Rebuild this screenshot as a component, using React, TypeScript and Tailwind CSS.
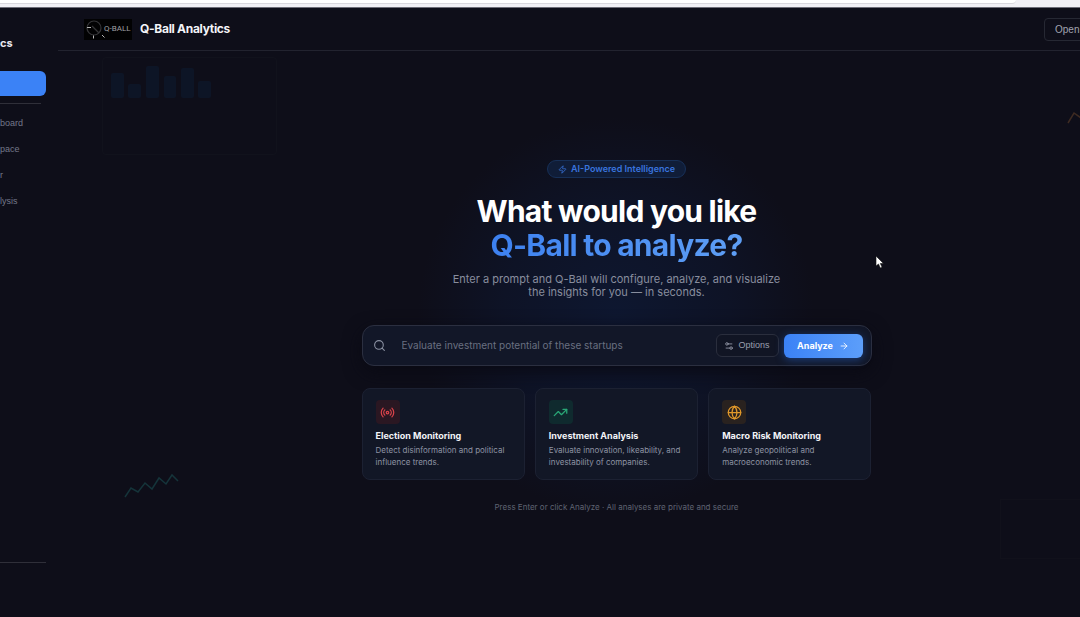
import React from "react";
import { ArrowRight, Globe, Radio, Search, Settings2, TrendingUp, Zap } from "lucide-react";

const navItems = ["board", "pace", "r", "lysis"];

const cards = [
  {
    title: "Election Monitoring",
    text: "Detect disinformation and political influence trends.",
    icon: Radio,
    tone: "bg-[#2a1722] text-[#d9434a]",
  },
  {
    title: "Investment Analysis",
    text: "Evaluate innovation, likeability, and investability of companies.",
    icon: TrendingUp,
    tone: "bg-[#0f2a2e] text-[#2aa877]",
  },
  {
    title: "Macro Risk Monitoring",
    text: "Analyze geopolitical and macroeconomic trends.",
    icon: Globe,
    tone: "bg-[#29221f] text-[#e0982a]",
  },
];

function BrowserEdge() {
  return (
    <div className="h-2 shrink-0 border-b border-[#6d6d78] bg-[#f1f0f5]">
      <div className="mr-16 h-1 rounded-br-md border-b border-[#d9d8de] bg-white" />
    </div>
  );
}

function Sidebar() {
  return (
    <aside className="flex w-[58px] shrink-0 flex-col pt-[27px]">
      <div className="text-[11px] leading-4 font-bold text-[#e8e8ee]">cs</div>
      <button type="button" aria-label="New analysis" className="mt-5 mr-3 h-[25px] rounded-r-md bg-[#3b82f6]" />
      <hr className="mt-[7px] mr-[17px] border-[#2f2f39]" />
      <nav className="mt-[7px] flex flex-col">
        {navItems.map((item) => (
          <a key={item} href="#" className="flex h-[26px] items-center font-['Liberation_Sans',sans-serif] text-[9px] text-[#747889]">
            {item}
          </a>
        ))}
      </nav>
      <hr className="mt-auto mr-3 mb-[54px] border-[#2f2f39]" />
    </aside>
  );
}

function Logo() {
  return (
    <svg width="48" height="21" viewBox="0 0 48 21" aria-label="Q-Ball">
      <rect width="48" height="21" fill="#020203" />
      <g fill="none" stroke="#343437" strokeWidth="1.200">
        <circle cx="10" cy="9" r="7" />
        <path d="M8 7l7 7" />
      </g>
      <path d="M3 8.500h4M9.500 16.500v3M18 16l2.500 2.500" stroke="#b5b5b5" strokeWidth="1" />
      <text x="20" y="12" fill="#a0a0a4" fontSize="8" fontFamily="Roboto, sans-serif">Q-BALL</text>
    </svg>
  );
}

function Backdrop() {
  return (
    <div aria-hidden="true" className="pointer-events-none absolute inset-0">
      <div className="absolute top-16 left-[358px] h-[400px] w-[400px] bg-[radial-gradient(circle_at_center,#0e1730_0%,#0e1326_40%,transparent_70%)]" />
      <div className="absolute top-1.5 left-11 flex h-[98px] w-[175px] items-start rounded border border-[#11121c] p-2">
        <svg width="104" height="32" viewBox="0 0 104 32" fill="#0d1526">
          <rect x="0" y="7" width="13" height="25" rx="2" />
          <rect x="17" y="18" width="13" height="14" rx="2" />
          <rect x="35" y="0" width="13" height="32" rx="2" />
          <rect x="53" y="10" width="12" height="22" rx="2" />
          <rect x="70" y="2" width="13" height="30" rx="2" />
          <rect x="87" y="15" width="13" height="17" rx="2" />
        </svg>
      </div>
      <svg className="absolute top-[422px] left-[66px]" width="56" height="26" viewBox="0 0 56 26" fill="none" stroke="#15343a" strokeWidth="1.500">
        <path d="M1 24l6-9 7 4 7-9 7 6 7-11 7 6 6-9 6 6" />
      </svg>
      <svg className="absolute top-[60px] left-[1009px]" width="50" height="20" viewBox="0 0 50 20" fill="none" stroke="#3e2b22" strokeWidth="1.500">
        <path d="M1 12l6-10 7 5 7-4" />
      </svg>
      <div className="absolute top-[448px] left-[942px] h-[60px] w-[120px] border border-[#11111b]" />
    </div>
  );
}

function SearchBar() {
  return (
    <form
      onSubmit={(e) => e.preventDefault()}
      className="mt-[26px] flex h-[41px] w-full items-center rounded-xl border border-[#2b2f40] bg-[#121728] pr-2 pl-2.5 shadow-[0_6px_18px_#0a0a14]"
    >
      <Search size={13} className="text-[#8c92a3]" />
      <input
        aria-label="Analysis prompt"
        placeholder="Evaluate investment potential of these startups"
        className="ml-4 min-w-0 flex-1 bg-transparent text-[10px] text-white outline-none placeholder:text-[#696f80]"
      />
      <button type="button" className="flex h-[23px] w-[63px] items-center justify-center gap-1 rounded-md border border-[#2a2e3d] bg-[#111524] font-['Liberation_Sans',sans-serif] text-[9px] text-[#9a9fae]">
        <Settings2 size={10} />
        Options
      </button>
      <button
        type="submit"
        className="ml-[5px] flex h-6 w-[79px] items-center justify-center gap-1.5 rounded-md bg-gradient-to-r from-[#3b82f6] to-[#5c9efa] text-[9px] font-bold text-white shadow-[0_2px_8px_#1c3d78]"
      >
        Analyze
        <ArrowRight size={10} />
      </button>
    </form>
  );
}

export default function App() {
  return (
    <div className="relative flex min-h-screen flex-col overflow-hidden bg-[#0e0e19] font-['Inter',sans-serif]">
      <BrowserEdge />
      <div className="flex flex-1">
        <Sidebar />
        <div className="-mr-[95px] flex min-w-0 flex-1 flex-col">
          <header className="flex h-[43px] shrink-0 items-center border-b border-[#22232f] pl-[26px]">
            <Logo />
            <span className="ml-2 text-xs font-bold tracking-tight text-[#f4f4f8]">Q-Ball Analytics</span>
            <button type="button" className="mr-4 ml-auto h-[23px] w-[115px] rounded border border-[#262833] pl-2.5 text-left font-['Liberation_Sans',sans-serif] text-[10px] text-[#a1a3b0]">
              Open
            </button>
          </header>
          <main className="relative flex flex-1 justify-center">
            <Backdrop />
            <div className="relative flex w-[510px] flex-col items-center pt-[109px]">
              <div className="flex h-[18px] items-center gap-1 rounded-full border border-[#173058] bg-[#101d38] px-2.5 text-[9px] font-semibold text-[#3974de]">
                <Zap size={9} />
                AI-Powered Intelligence
              </div>
              <h1 className="mt-4 text-center text-[30px] leading-[34px] font-bold tracking-tight text-white">
                What would you like
                <span className="block bg-gradient-to-r from-[#3b7ff0] to-[#60a0f5] bg-clip-text text-transparent">Q-Ball to analyze?</span>
              </h1>
              <p className="mt-[11px] text-center text-[11px] leading-[13px] text-[#888d9e]">
                Enter a prompt and Q-Ball will configure, analyze, and visualize
                <br />
                the insights for you — in seconds.
              </p>
              <SearchBar />
              <div className="mt-[22px] grid w-full grid-cols-3 gap-2.5">
                {cards.map(({ title, text, icon: Icon, tone }) => (
                  <a key={title} href="#" className="h-[92px] rounded-lg border border-[#1c2132] bg-[#121726] px-[13px] pt-[11px]">
                    <span className={`flex size-6 items-center justify-center rounded ${tone}`}>
                      <Icon size={15} />
                    </span>
                    <h2 className="mt-1 text-[9px] leading-4 font-bold text-[#f2f3f7]">{title}</h2>
                    <p className="text-[8px] leading-[12px] text-[#8e93a3]">{text}</p>
                  </a>
                ))}
              </div>
              <p className="mt-5 text-[8px] leading-[14px] text-[#5f6372]">Press Enter or click Analyze · All analyses are private and secure</p>
            </div>
          </main>
        </div>
      </div>
      <svg aria-hidden="true" className="absolute top-[255px] left-[875px]" width="9" height="14" viewBox="0 0 9 14">
        <path d="M1 1v10l2.500-2 1.800 4 1.800-.8-1.800-3.700H8.500z" fill="#fff" stroke="#111" strokeWidth=".6" />
      </svg>
    </div>
  );
}
